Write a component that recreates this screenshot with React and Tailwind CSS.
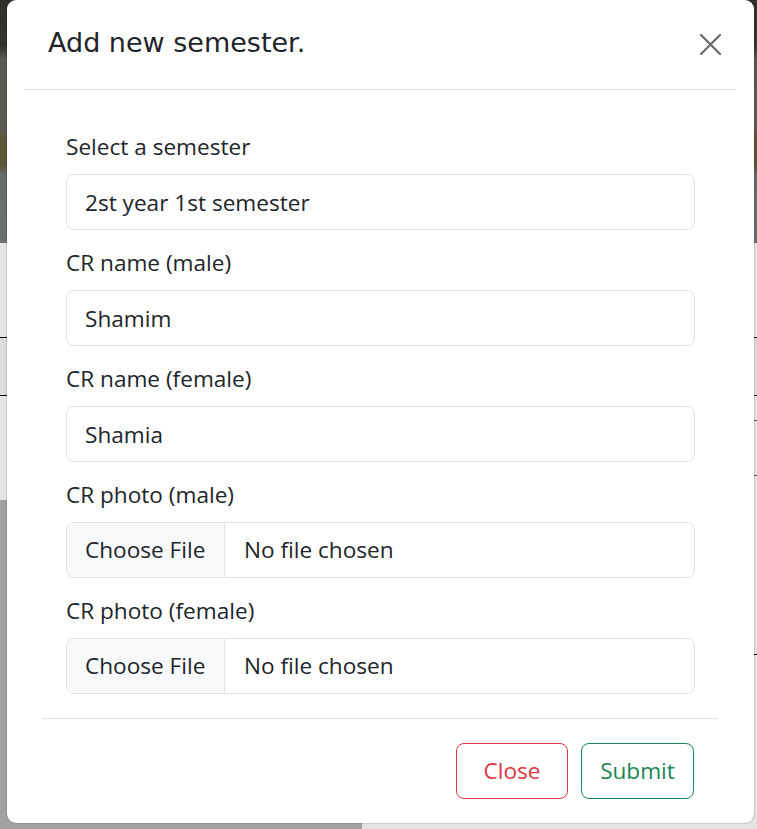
import { useState } from "react";

const campos = [
  { label: "Select a semester", value: "2st year 1st semester" },
  { label: "CR name (male)", value: "Shamim" },
  { label: "CR name (female)", value: "Shamia" },
];

const fotos = ["CR photo (male)", "CR photo (female)"];

function Fundo() {
  return (
    <div className="flex h-[829px] w-full flex-col">
      {/* topo escurecido */}
      <div className="h-[243px] w-full bg-[linear-gradient(180deg,#2f2f2b_0px,#34342f_45px,#595a51_60px,#5b5b52_130px,#5e5638_140px,#5a5437_165px,#676b6b_175px,#6d7070_243px)]" />
      <div className="flex flex-1">
        <div className="flex w-[362px] flex-col">
          <div className="h-[257px] bg-[#e4e4e4] pt-[94px]">
            <div className="h-[59px] border-y border-black bg-[#dcdcdc]" />
          </div>
          <div className="flex-1 bg-[#a2a2a2]" />
        </div>
        <div className="flex-1 bg-[#e3e3e3] pt-[94px]">
          <div className="h-[59px] border-y border-black bg-[#dcdcdc]" />
          <div className="mt-[24px] h-[56px] border-y border-[#2b7a4b]" />
          <div className="mt-[178px] border-t border-black" />
        </div>
      </div>
    </div>
  );
}

export default function App() {
  const [valores, setValores] = useState(campos.map((c) => c.value));

  return (
    <div className="relative h-[829px] w-full overflow-hidden font-['Open_Sans',sans-serif]">
      <Fundo />

      {/* MODAL */}
      <div className="absolute inset-0 pl-[7px] pr-[3px]">
        <div className="flex h-[823px] flex-col rounded-[9px] bg-white shadow-[0_0_2px_rgba(0,0,0,0.4)]">
          <div className="ml-[17px] mr-[18px] flex h-[90px] items-center justify-between border-b border-[#dee2e6] pl-[24px] pr-[12px]">
            <h5 className="pb-[2px] font-['DejaVu_Sans',sans-serif] text-[27px] font-normal text-[#212529]">
              Add new semester.
            </h5>
            <button className="p-[2px]">
              <svg width="23" height="23" viewBox="0 0 23 23">
                <path
                  d="M2 2 L21 21 M21 2 L2 21"
                  stroke="#6c6c6c"
                  strokeWidth="2.3"
                  strokeLinecap="round"
                />
              </svg>
            </button>
          </div>

          <div className="flex flex-col px-[59px] pt-[42px] text-[22.6px] text-[#212529]">
            {campos.map((c, i) => (
              <div key={c.label} className="mb-[18px]">
                <label className="mb-[12px] block leading-[30px]">{c.label}</label>
                <input
                  className="block h-[56px] w-full rounded-[8px] border border-[#dee2e6] px-[18px] outline-none"
                  value={valores[i]}
                  onChange={(e) =>
                    setValores((p) => p.map((v, j) => (j === i ? e.target.value : v)))
                  }
                />
              </div>
            ))}

            {fotos.map((f, i) => (
              <div key={f} className={i === 0 ? "mb-[18px]" : ""}>
                <label className="mb-[12px] block leading-[30px]">{f}</label>
                <div className="flex h-[56px] w-full overflow-hidden rounded-[8px] border border-[#dee2e6]">
                  <span className="flex w-[158px] items-center border-r border-[#dee2e6] bg-[#f8f9fa] pl-[18px]">
                    Choose File
                  </span>
                  <span className="flex items-center pl-[19px]">No file chosen</span>
                </div>
              </div>
            ))}
          </div>

          <div className="ml-[35px] mr-[36px] mt-[24px] flex justify-end gap-[13px] border-t border-[#dee2e6] pr-[24px] pt-[24px] text-[22.6px]">
            <button className="h-[56px] w-[112px] rounded-[8px] border border-[#dc3545] text-[#dc3545]">
              Close
            </button>
            <button className="h-[56px] w-[113px] rounded-[8px] border border-[#198754] text-[#198754]">
              Submit
            </button>
          </div>
        </div>
      </div>
    </div>
  );
}
